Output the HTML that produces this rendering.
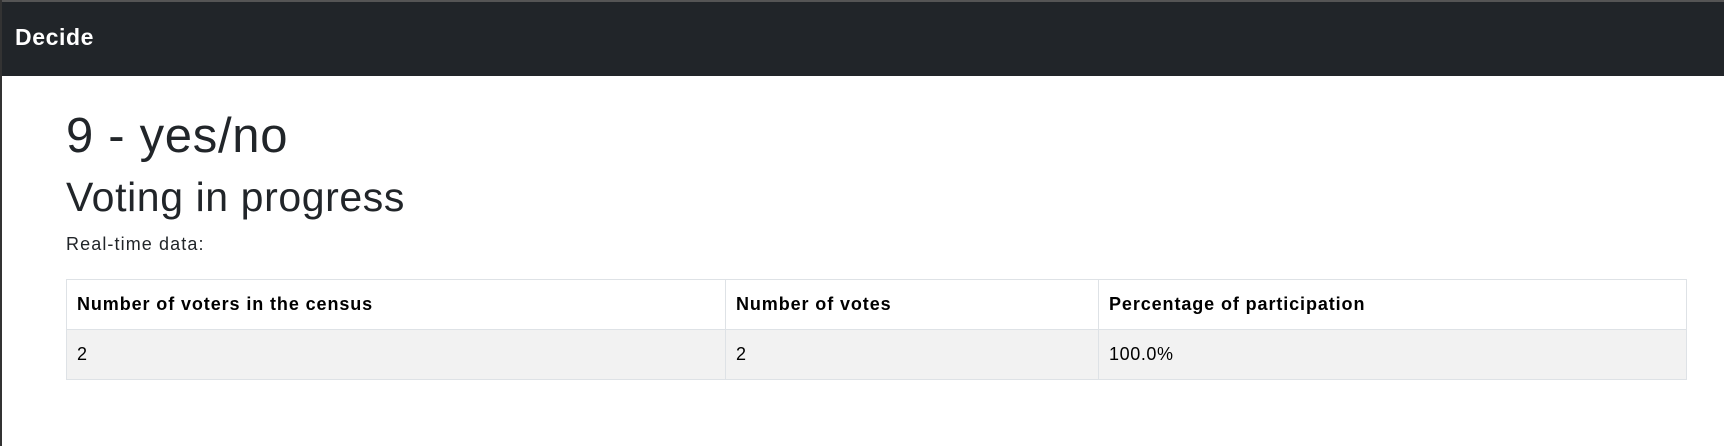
<!DOCTYPE html>
<html><head><style>
body{margin:0;width:1724px;height:446px;background:#fff;font-family:"Liberation Sans",sans-serif;color:#212529;position:relative;overflow:hidden}
.top{position:absolute;left:0;top:0;width:1724px;height:2px;background:#555}
.lb{position:absolute;left:0;top:0;width:2px;height:446px;background:#333}
.nav{position:absolute;left:0;top:2px;width:1724px;height:74px;background:#212529}
.nav span{position:absolute;left:15px;top:21px;color:#fff;font-size:23px;line-height:28px;font-weight:bold;letter-spacing:0.6px}
h1{position:absolute;left:66px;top:108px;margin:0;font-size:49px;font-weight:normal;line-height:56px;letter-spacing:0.7px}
h2{position:absolute;left:66px;top:173px;margin:0;font-size:41px;font-weight:normal;line-height:48px;letter-spacing:0.6px}
p{position:absolute;left:66px;top:233px;margin:0;font-size:18px;line-height:22px;letter-spacing:1.1px}
table{position:absolute;left:66px;top:279px;width:1621px;border-collapse:collapse;font-size:18px}
td,th{border:1px solid #dee2e6;height:49px;padding:0 0 0 10px;text-align:left;color:#000}
th{font-weight:bold;letter-spacing:0.9px}
td{letter-spacing:0.6px}
tr.b td{background:#f2f2f2}
</style></head><body>
<div class="top"></div>
<div class="nav"><span>Decide</span></div>
<div class="lb"></div>
<h1>9 - yes/no</h1>
<h2>Voting in progress</h2>
<p>Real-time data:</p>
<table>
<tr><th style="width:648px">Number of voters in the census</th><th style="width:362px">Number of votes</th><th>Percentage of participation</th></tr>
<tr class="b"><td>2</td><td>2</td><td>100.0%</td></tr>
</table>
</body></html>
